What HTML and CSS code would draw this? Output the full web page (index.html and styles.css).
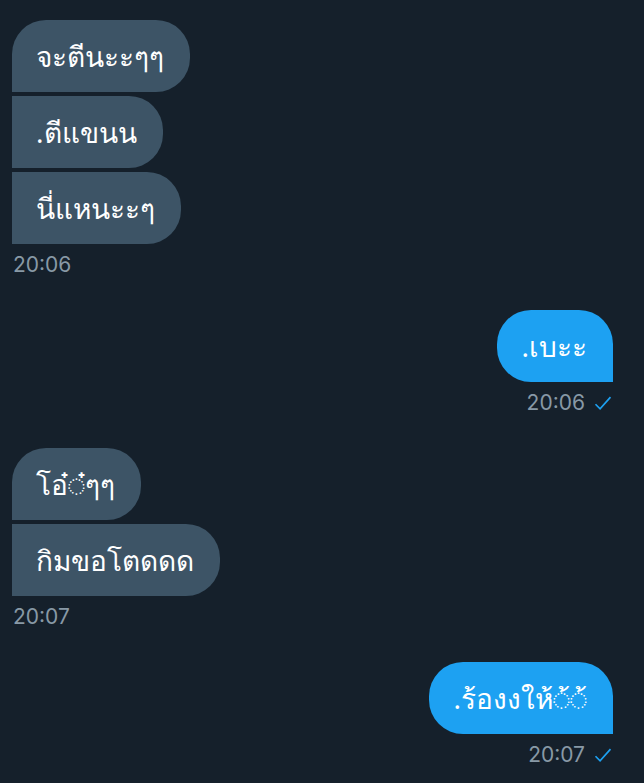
FILE: index.html
```html
<!DOCTYPE html>
<html lang="th">
<head>
    <meta charset="UTF-8">
    <meta name="viewport" content="width=device-width, initial-scale=1.0">
    <title>Messages</title>
    <link rel="stylesheet" href="styles.css">
</head>
<body>
    <div class="thread">
        <div class="group received">
            <div class="bubble first">จะตีนะะๆๆ</div>
            <div class="bubble">.ตีแขนน</div>
            <div class="bubble">นี่แหนะะๆ</div>
            <div class="meta">20:06</div>
        </div>

        <div class="group sent">
            <div class="bubble first">.เบะะ</div>
            <div class="meta">20:06 <svg class="check" viewBox="0 0 24 24"><path d="M3 13.5l5.5 5.5L21 5"/></svg></div>
        </div>

        <div class="group received">
            <div class="bubble first">โอ๋&#x25CC;๋ๆๆ</div>
            <div class="bubble">กิมขอโตดดด</div>
            <div class="meta">20:07</div>
        </div>

        <div class="group sent">
            <div class="bubble first">.ร้องงให้&#x25CC;้&#x25CC;้</div>
            <div class="meta">20:07 <svg class="check" viewBox="0 0 24 24"><path d="M3 13.5l5.5 5.5L21 5"/></svg></div>
        </div>
    </div>
</body>
</html>
```

FILE: styles.css
```css
body {
    margin: 0;
    background-color: #15202b;
    font-family: "Noto Sans", "DejaVu Sans", sans-serif;
    color: #ffffff;
}
.thread {
    display: flex;
    flex-direction: column;
    padding: 20px 31px 0 12px;
}
.group {
    display: flex;
    flex-direction: column;
    gap: 4px;
    margin-bottom: 33px;
}
.received {
    align-items: flex-start;
}
.sent {
    align-items: flex-end;
}
.bubble {
    font-size: 28px;
    line-height: 32px;
    padding: 20px 26px 20px 24px;
    white-space: nowrap;
}
.received .bubble {
    background-color: #3d5466;
    border-radius: 0 34px 34px 0;
}
.received .bubble.first {
    border-radius: 34px 34px 34px 0;
}
.sent .bubble {
    background-color: #1da1f2;
    border-radius: 34px 34px 0 34px;
}
.meta {
    margin-top: 5px;
    font-family: Inter, "Liberation Sans", sans-serif;
    font-size: 21px;
    line-height: 24px;
    color: #8899a6;
    display: flex;
    align-items: center;
    gap: 8px;
}
.received .meta {
    padding-left: 1px;
}
.check {
    width: 20px;
    height: 20px;
    fill: none;
    stroke: #1da1f2;
    stroke-width: 2;
}
```
